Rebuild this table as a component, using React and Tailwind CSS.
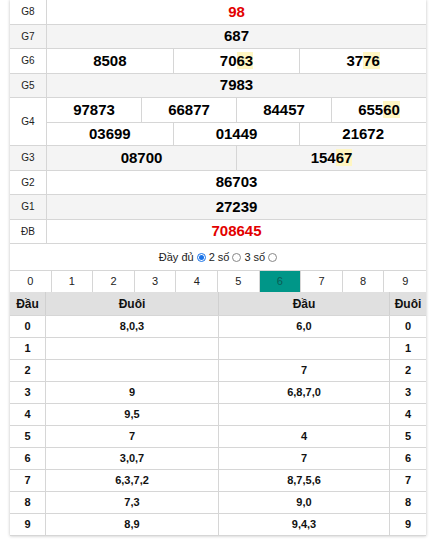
import React from 'react';

const font = { fontFamily: '"Liberation Sans", Arial, sans-serif' };

function Num({ value, hl = 0, red }) {
  const head = hl ? value.slice(0, value.length - hl) : value;
  const tail = hl ? value.slice(value.length - hl) : '';
  return (
    <span className={red ? 'text-[#e30000]' : 'text-black'}>
      {head}
      {tail && <span className="bg-[#fff6c2]">{tail}</span>}
    </span>
  );
}

const prizes = [
  { label: 'G8', rows: [[{ v: '98', red: true }]] },
  { label: 'G7', rows: [[{ v: '687' }]], alt: true },
  { label: 'G6', rows: [[{ v: '8508' }, { v: '7063', hl: 2 }, { v: '3776', hl: 2 }]] },
  { label: 'G5', rows: [[{ v: '7983' }]], alt: true },
  {
    label: 'G4',
    rows: [
      [{ v: '97873' }, { v: '66877' }, { v: '84457' }, { v: '65560', hl: 2 }],
      [{ v: '03699' }, { v: '01449' }, { v: '21672' }],
    ],
  },
  { label: 'G3', rows: [[{ v: '08700' }, { v: '15467', hl: 2 }]], alt: true },
  { label: 'G2', rows: [[{ v: '86703' }]] },
  { label: 'G1', rows: [[{ v: '27239' }]], alt: true },
  { label: 'ĐB', rows: [[{ v: '708645', red: true }]] },
];

const dau = ['8,0,3', '', '', '9', '9,5', '7', '3,0,7', '6,3,7,2', '7,3', '8,9'];
const duoi = ['6,0', '', '7', '6,8,7,0', '', '4', '7', '8,7,5,6', '9,0', '9,4,3'];

export default function App() {
  return (
    <div className="w-[430px] h-[544px] bg-white overflow-hidden" style={font}>
      <div className="ml-[10px] w-[416px] bg-white shadow-[0_0_3px_rgba(0,0,0,0.25)]">
        {prizes.map((p) => (
          <div key={p.label} className={`flex border-b border-[#d6d6d6] ${p.alt ? 'bg-[#f4f4f4]' : 'bg-white'}`}>
            <div className="w-[37px] shrink-0 flex items-center justify-center border-r border-[#d6d6d6] text-[10px] text-[#222]">
              {p.label}
            </div>
            <div className="flex-1 flex flex-col">
              {p.rows.map((r, ri) => (
                <div key={ri} className={`flex h-[23.5px] ${ri > 0 ? 'border-t border-[#d6d6d6]' : ''}`}>
                  {r.map((c, ci) => (
                    <div
                      key={ci}
                      className={`flex-1 flex items-center justify-center text-[15px] font-bold ${ci > 0 ? 'border-l border-[#d6d6d6]' : ''}`}
                    >
                      <Num value={c.v} hl={c.hl} red={c.red} />
                    </div>
                  ))}
                </div>
              ))}
            </div>
          </div>
        ))}

        <div className="h-[27px] flex items-center justify-center gap-[3px] text-[11px] text-[#222] border-b border-[#d6d6d6]">
          <span>Đầy đủ</span>
          <span className="w-[9px] h-[9px] rounded-full border border-[#1a73e8] flex items-center justify-center">
            <span className="w-[5px] h-[5px] rounded-full bg-[#1a73e8]" />
          </span>
          <span>2 số</span>
          <span className="w-[9px] h-[9px] rounded-full border border-[#888]" />
          <span>3 số</span>
          <span className="w-[9px] h-[9px] rounded-full border border-[#888]" />
        </div>

        <div className="grid grid-cols-10 h-[21px] text-[11px] text-[#222]">
          {[0, 1, 2, 3, 4, 5, 6, 7, 8, 9].map((n) => (
            <div
              key={n}
              className={`flex items-center justify-center border-r border-[#d6d6d6] last:border-r-0 ${n === 6 ? 'bg-[#009688] text-[#0a5c55]' : ''}`}
            >
              {n}
            </div>
          ))}
        </div>

        <div className="text-[11px] font-bold text-[#111]">
          <div className="flex h-[24px] bg-[#e0e0e0] border-b border-[#d6d6d6] text-[12px]">
            <div className="w-[36px] flex items-center justify-center border-r border-[#d0d0d0]">Đầu</div>
            <div className="w-[173px] flex items-center justify-center border-r border-[#d0d0d0]">Đuôi</div>
            <div className="flex-1 flex items-center justify-center border-r border-[#d0d0d0]">Đầu</div>
            <div className="w-[36px] flex items-center justify-center">Đuôi</div>
          </div>
          {dau.map((d, i) => (
            <div key={i} className="flex h-[22px] border-b border-[#d6d6d6]">
              <div className="w-[36px] flex items-center justify-center border-r border-[#d6d6d6]">{i}</div>
              <div className="w-[173px] flex items-center justify-center border-r border-[#d6d6d6]">{d}</div>
              <div className="flex-1 flex items-center justify-center border-r border-[#d6d6d6]">{duoi[i]}</div>
              <div className="w-[36px] flex items-center justify-center">{i}</div>
            </div>
          ))}
        </div>
      </div>
    </div>
  );
}
